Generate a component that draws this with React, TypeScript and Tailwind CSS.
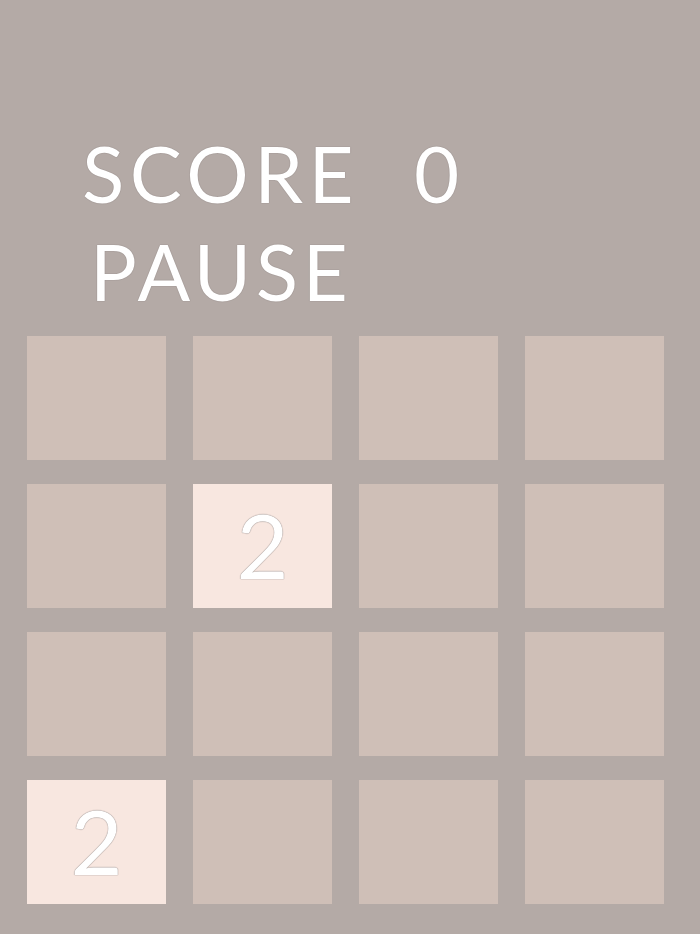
import React from "react";

const board: number[][] = [
  [0, 0, 0, 0],
  [0, 2, 0, 0],
  [0, 0, 0, 0],
  [2, 0, 0, 0],
];

const outlined = "text-white [text-shadow:0_0_1px_#8f8480,0_0_1px_#8f8480]";

function Tile({ value }: { value: number }) {
  return (
    <div
      className={
        "flex h-[124px] w-[139px] items-center justify-center " +
        (value ? "bg-[#f8e7e0]" : "bg-[#cfbfb7]")
      }
    >
      {value ? (
        <span className={"pb-[4px] text-[90px] leading-none font-normal " + outlined}>{value}</span>
      ) : null}
    </div>
  );
}

export default function App() {
  return (
    <div
      className="flex h-[934px] w-[700px] flex-col bg-[#b4aaa6]"
      style={{ fontFamily: "Lato, 'Open Sans', sans-serif" }}
    >
      <div
        className={
          "flex flex-col pl-[82px] pt-[124px] text-[78px] leading-[98px] font-normal tracking-[0.07em] " +
          outlined
        }
      >
        <div className="flex gap-[55px]">
          <span>SCORE</span>
          <span>0</span>
        </div>
        <span className="pl-[8px] tracking-[0.06em]">PAUSE</span>
      </div>
      <div className="mt-[16px] grid grid-cols-[repeat(4,139px)] gap-x-[27px] gap-y-[24px] pl-[27px]">
        {board.flat().map((v, i) => (
          <Tile key={i} value={v} />
        ))}
      </div>
    </div>
  );
}
